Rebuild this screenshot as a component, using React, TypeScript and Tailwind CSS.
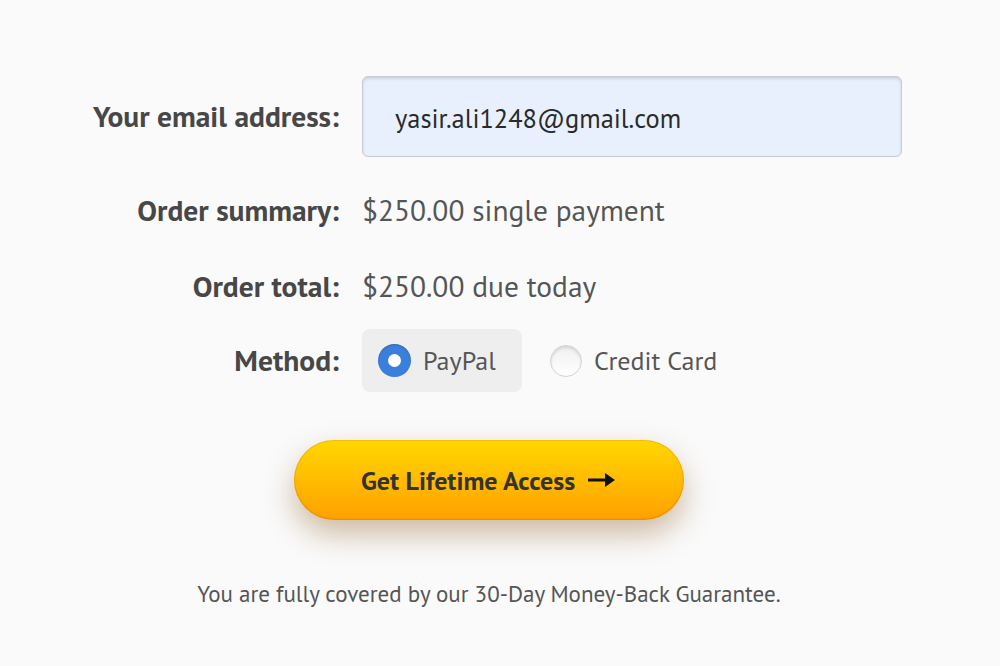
import React from 'react';

const FONT = { fontFamily: '"PT Sans", Lato, "Noto Sans", sans-serif' };

function Row({ label, children, className = '' }: { label: string; children: React.ReactNode; className?: string }) {
  return (
    <div className={`flex items-center ${className}`}>
      <div className="w-[263px] shrink-0 text-right text-[29.5px] font-bold text-[#474747] whitespace-nowrap">{label}</div>
      <div className="ml-[23px] flex items-center">{children}</div>
    </div>
  );
}

export default function App() {
  return (
    <div className="w-[1000px] h-[666px] bg-[#fafafa] overflow-hidden" style={FONT}>
      <div className="ml-[76px] w-[826px] pt-[76px] flex flex-col">
        <Row label="Your email address:" className="h-[81px]">
          <input
            readOnly
            value="yasir.ali1248@gmail.com"
            className="w-[540px] h-[81px] rounded-[6px] border-[1.5px] border-[#c6cad1] bg-[#e8f0fe] pl-[32px] pt-[2px] text-[26.4px] text-[#2a2a2a] outline-none shadow-[inset_0_2px_3px_rgba(0,0,0,0.12)]"
            style={FONT}
          />
        </Row>

        <Row label="Order summary:" className="h-[56px] mt-[25px]">
          <span className="text-[29.4px] text-[#555]">$250.00 single payment</span>
        </Row>

        <Row label="Order total:" className="h-[56px] mt-[20px]">
          <span className="text-[29.4px] text-[#555]">$250.00 due today</span>
        </Row>

        <Row label="Method:" className="h-[63px] mt-[15px]">
          <div className="flex items-center">
            <label className="flex items-center h-[63px] w-[160px] rounded-[8px] bg-[#eeeeee] pl-[16px]">
              <span className="w-[33px] h-[33px] rounded-full bg-[#3a7fdb] flex items-center justify-center shadow-[inset_0_1px_2px_rgba(0,0,0,0.2)]">
                <span className="w-[13px] h-[13px] rounded-full bg-white" />
              </span>
              <span className="ml-[12px] text-[26px] text-[#555]">PayPal</span>
            </label>
            <label className="flex items-center ml-[28px]">
              <span className="w-[32px] h-[32px] rounded-full bg-gradient-to-b from-[#f0f0f0] to-white border border-[#d4d4d4] shadow-[inset_0_2px_3px_rgba(0,0,0,0.12)]" />
              <span className="ml-[12px] text-[26px] text-[#555]">Credit Card</span>
            </label>
          </div>
        </Row>

        <div className="flex justify-center mt-[48px]">
          <button
            className="w-[390px] h-[80px] rounded-full bg-gradient-to-b from-[#ffd700] to-[#ffa000] text-[26px] font-bold text-[#333] flex items-center justify-center shadow-[0_14px_30px_rgba(140,90,30,0.4),inset_0_-1px_2px_rgba(200,120,0,0.45),inset_0_0_0_1px_rgba(230,150,0,0.35)]"
            style={FONT}
          >
            Get Lifetime Access
            <svg width="30" height="16" viewBox="0 0 30 16" className="ml-[12px]">
              <path d="M1 8 H20" stroke="#111" strokeWidth="3" />
              <path d="M18 1 L28 8 L18 15 Z" fill="#111" />
            </svg>
          </button>
        </div>

        <p className="mt-[57px] text-center text-[23px] text-[#555]">
          You are fully covered by our 30-Day Money-Back Guarantee.
        </p>
      </div>
    </div>
  );
}
